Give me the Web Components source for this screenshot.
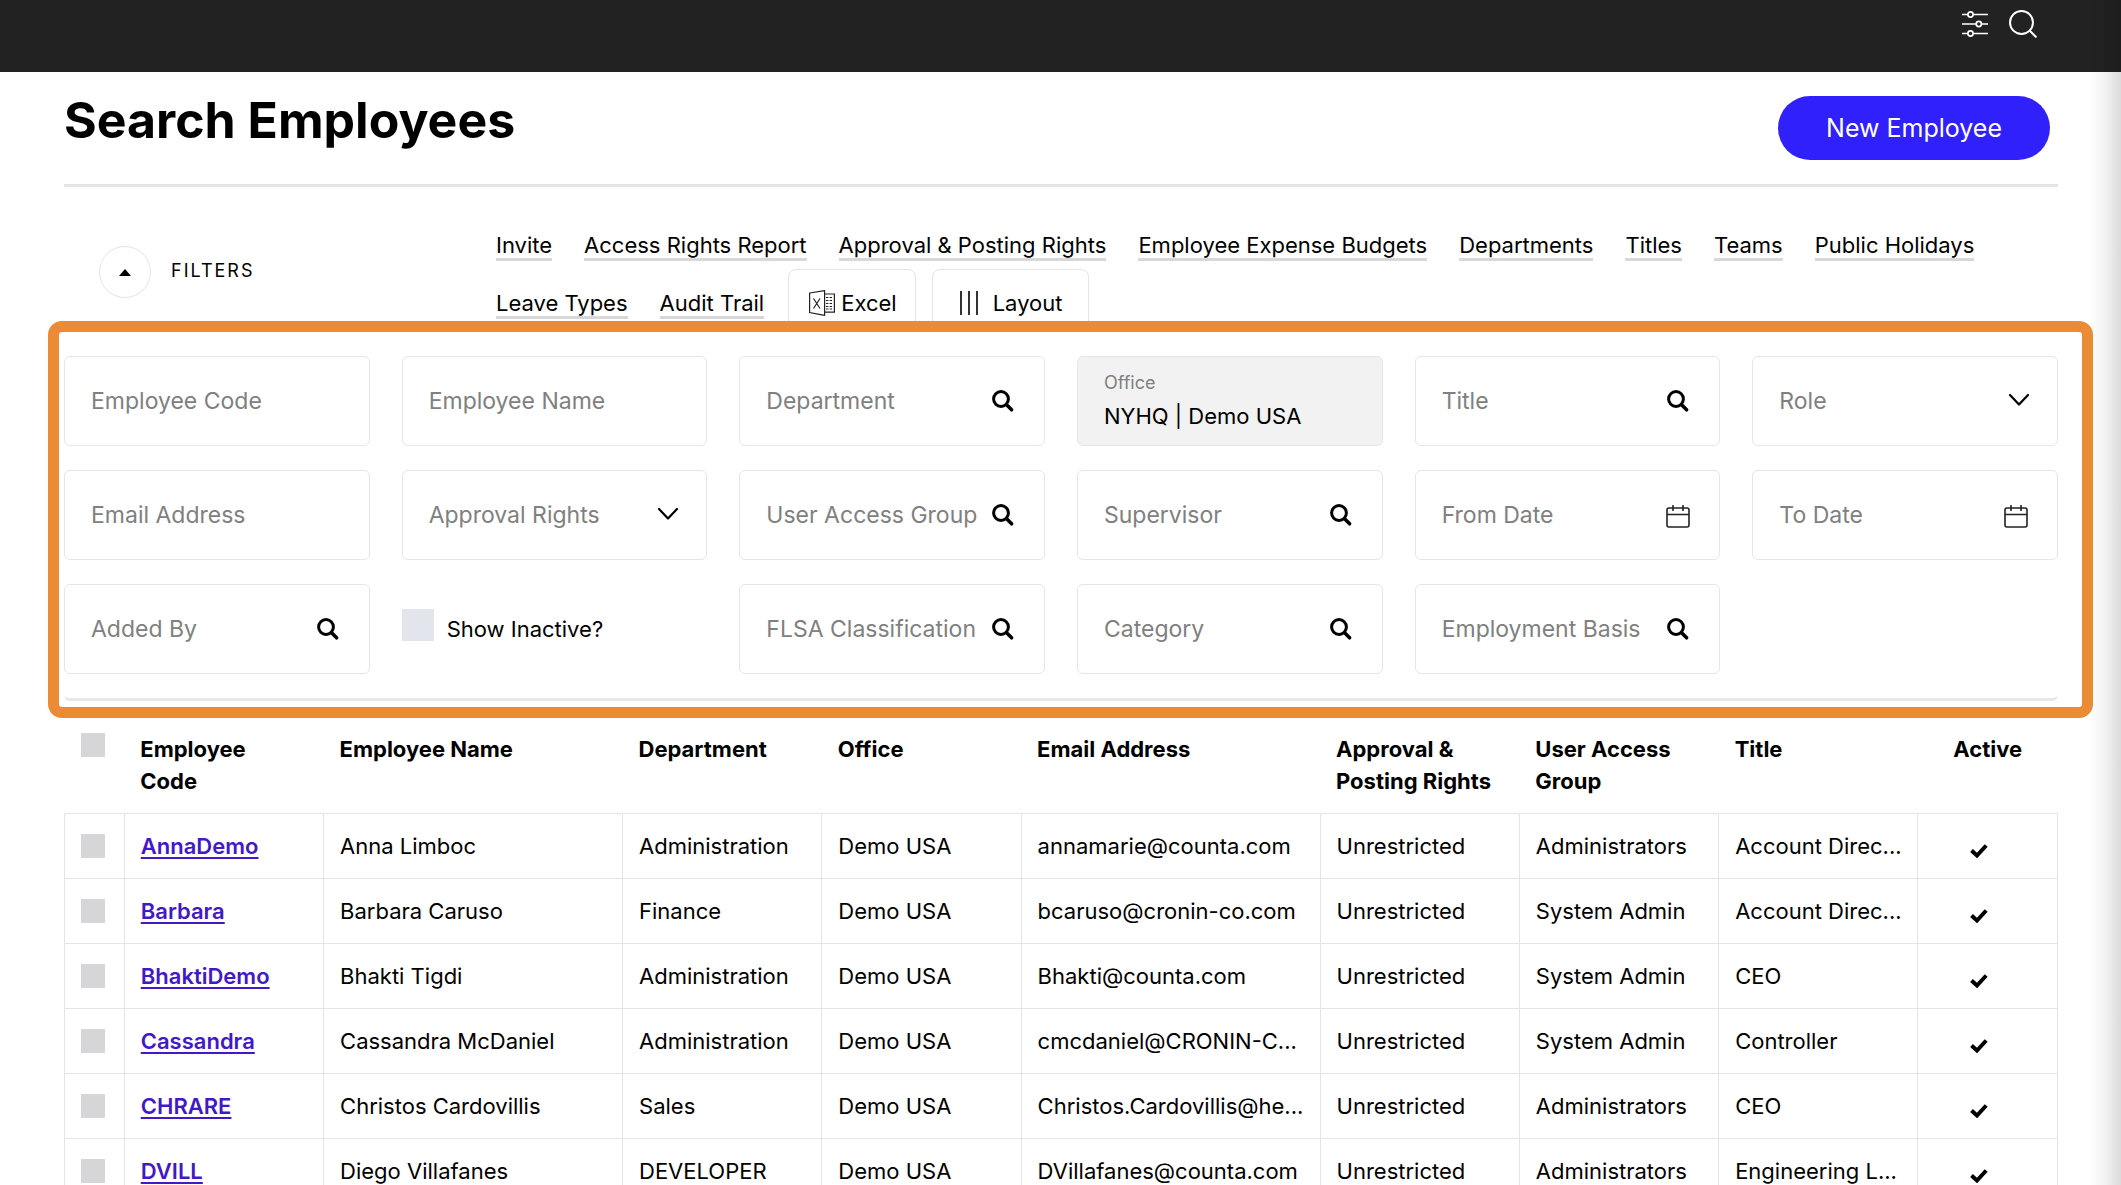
<!DOCTYPE html>
<html lang="en">
<head>
<meta charset="utf-8">
<title>Search Employees</title>
<style>
  body {
    margin: 0;
    background: #fff;
    color: #000;
    font-family: Inter, "Open Sans", sans-serif;
    font-size: 22px;
  }
</style>
</head>
<body>
<employee-page>
  <top-bar slot="top"></top-bar>
  <page-heading heading="Search Employees" action="New Employee"></page-heading>
  <page-toolbar>
    <a href="#invite">Invite</a>
    <a href="#access-rights">Access Rights Report</a>
    <a href="#approval">Approval &amp; Posting Rights</a>
    <a href="#budgets">Employee Expense Budgets</a>
    <a href="#departments">Departments</a>
    <a href="#titles">Titles</a>
    <a href="#teams">Teams</a>
    <a href="#holidays">Public Holidays</a>
    <a href="#leave">Leave Types</a>
    <a href="#audit">Audit Trail</a>
  </page-toolbar>
  <filter-panel>
    <filter-field label="Employee Code"></filter-field>
    <filter-field label="Employee Name"></filter-field>
    <filter-field label="Department" icon="search"></filter-field>
    <filter-field label="Office" value="NYHQ | Demo USA"></filter-field>
    <filter-field label="Title" icon="search"></filter-field>
    <filter-field label="Role" icon="chevron"></filter-field>
    <filter-field label="Email Address"></filter-field>
    <filter-field label="Approval Rights" icon="chevron"></filter-field>
    <filter-field label="User Access Group" icon="search"></filter-field>
    <filter-field label="Supervisor" icon="search"></filter-field>
    <filter-field label="From Date" icon="calendar"></filter-field>
    <filter-field label="To Date" icon="calendar"></filter-field>
    <filter-field label="Added By" icon="search"></filter-field>
    <filter-check label="Show Inactive?"></filter-check>
    <filter-field label="FLSA Classification" icon="search"></filter-field>
    <filter-field label="Category" icon="search"></filter-field>
    <filter-field label="Employment Basis" icon="search"></filter-field>
  </filter-panel>
  <employee-table></employee-table>
</employee-page>

<script>
const ICONS = {
  search: `<svg width="23" height="22" viewBox="0 0 23 22" fill="none" stroke="#000"><circle cx="9" cy="9" r="7.4" stroke-width="3"/><path d="M14.6 14.8l5 5" stroke-width="3.6" stroke-linecap="round"/></svg>`,
  chevron: `<svg width="20" height="22" viewBox="0 0 20 22" fill="none" stroke="#000" stroke-width="2.2" stroke-linecap="round" stroke-linejoin="round"><path d="M2 5l9 9.5L20 5"/></svg>`,
  calendar: `<svg width="24" height="26" viewBox="0 -2 24 26" fill="none" stroke="#222" stroke-width="1.6"><rect x="1" y="4" width="22" height="19" rx="2"/><path d="M1 10.5h22M7 1v6M17 1v6"/></svg>`,
};

class EmployeePage extends HTMLElement {
  constructor() {
    super();
    this.attachShadow({ mode: 'open' });
    this.shadowRoot.innerHTML = `
      <style>
        :host { display: block; position: relative; height: 100vh; overflow: hidden; }
        main { padding: 0 63px 0 64px; }
        .edge {
          position: absolute;
          top: 0;
          right: 0;
          bottom: 0;
          width: 32px;
          background: linear-gradient(to right, rgba(0,0,0,0), rgba(0,0,0,0.05) 50%, rgba(0,0,0,0.14));
          pointer-events: none;
        }
      </style>
      <slot name="top"></slot>
      <main><slot></slot></main>
      <div class="edge"></div>
    `;
  }
}
customElements.define('employee-page', EmployeePage);

class TopBar extends HTMLElement {
  constructor() {
    super();
    this.attachShadow({ mode: 'open' });
    this.shadowRoot.innerHTML = `
      <style>
        :host {
          display: flex;
          justify-content: flex-end;
          align-items: flex-start;
          gap: 20px;
          height: 72px;
          box-sizing: border-box;
          padding: 10px 84px 0 0;
          background: #222;
        }
        button { display: block; padding: 0; border: none; background: none; cursor: pointer; }
        svg { display: block; }
      </style>
      <button type="button" aria-label="Settings">
        <svg width="28" height="28" viewBox="0 0 28 28" fill="none" stroke="#fff" stroke-width="1.7">
          <path d="M1 4.5h6M12.4 4.5h14.6M1 14h14.5M20.7 14h6.3M1 23.5h6M12.4 23.5h14.6"/>
          <circle cx="9.5" cy="4.5" r="2.6"/><circle cx="17.8" cy="14" r="2.6"/><circle cx="9.5" cy="23.5" r="2.6"/>
        </svg>
      </button>
      <button type="button" aria-label="Search">
        <svg width="28" height="28" viewBox="0 0 28 28" fill="none" stroke="#fff" stroke-width="2" stroke-linecap="round">
          <circle cx="12.5" cy="12.5" r="11.5"/><path d="M20.8 20.8l6 6"/>
        </svg>
      </button>
    `;
  }
}
customElements.define('top-bar', TopBar);

class PageHeading extends HTMLElement {
  constructor() {
    super();
    this.attachShadow({ mode: 'open' });
    this.shadowRoot.innerHTML = `
      <style>
        :host {
          display: flex;
          justify-content: space-between;
          align-items: flex-start;
          padding: 24px 8px 24px 0;
          border-bottom: 3px solid #e4e4e4;
        }
        h1 { margin: 0; font-size: 50px; line-height: 48px; font-weight: 700; }
        button {
          height: 64px;
          padding: 0 48px;
          border: none;
          border-radius: 32px;
          background: #2f20fc;
          color: #fff;
          font: inherit;
          font-size: 25px;
          cursor: pointer;
        }
      </style>
      <h1></h1>
      <button type="button"></button>
    `;
  }

  connectedCallback() {
    this.shadowRoot.querySelector('h1').textContent = this.getAttribute('heading');
    this.shadowRoot.querySelector('button').textContent = this.getAttribute('action');
  }
}
customElements.define('page-heading', PageHeading);

class PageToolbar extends HTMLElement {
  constructor() {
    super();
    this.attachShadow({ mode: 'open' });
    this.shadowRoot.innerHTML = `
      <style>
        :host { display: flex; align-items: flex-start; padding-top: 45px; }
        .toggle {
          display: flex;
          align-items: center;
          gap: 20px;
          flex: 0 0 432px;
          box-sizing: border-box;
          padding: 14px 0 0 35px;
          font-size: 18px;
          letter-spacing: 2px;
        }
        .toggle span { padding-bottom: 4px; }
        .toggle button {
          display: grid;
          place-items: center;
          width: 52px;
          height: 52px;
          padding: 0;
          border: 1px solid #e4e4e4;
          border-radius: 50%;
          background: #fff;
          cursor: pointer;
        }
        nav { display: flex; flex-wrap: wrap; align-items: baseline; gap: 8px 24px; flex: 1; min-width: 0; }
        ::slotted(a) {
          margin-right: 8px;
          border-bottom: 3px solid #d8d8d8;
          color: #000;
          line-height: 26px;
          text-decoration: none;
          white-space: nowrap;
        }
        ::slotted(a:last-child) { margin-right: 0; }
        .actions { display: flex; gap: 16px; }
        .actions button {
          display: flex;
          align-items: center;
          gap: 6px;
          padding: 20px 18px 15px 20px;
          border: 1px solid #e4e4e4;
          border-radius: 8px;
          background: #fff;
          color: #000;
          font: inherit;
          line-height: 26px;
          cursor: pointer;
        }
        .actions span { align-self: baseline; }
        .actions .layout { gap: 14px; padding: 20px 26px 15px; }
      </style>
      <div class="toggle">
        <button type="button" aria-labelledby="filters">
          <svg width="12" height="7" viewBox="0 0 12 7"><path d="M6 0l6 7H0z"/></svg>
        </button>
        <span id="filters">FILTERS</span>
      </div>
      <nav>
        <slot></slot>
        <div class="actions">
          <button type="button">
            <svg width="26" height="26" viewBox="0 0 26 26" fill="none" stroke="#222" stroke-width="1.2">
              <path d="M.6 3L15.6.6v24.8L.6 22.6z"/>
              <path d="M15.6 4h9.8v18.2h-9.8"/>
              <path d="M4.5 8.5l6.500 10M11 8.5l-6.500 10"/>
              <path d="M17 7.5h6M17 10.5h6M17 13.5h6M17 16.5h6M17 19h6" stroke-dasharray="2.4 1.2"/>
            </svg>
            <span>Excel</span>
          </button>
          <button type="button" class="layout">
            <svg width="20" height="26" viewBox="0 0 20 26" stroke="#333" stroke-width="2"><path d="M2 1v24M10 1v24M18 1v24"/></svg>
            <span>Layout</span>
          </button>
        </div>
      </nav>
    `;
  }
}
customElements.define('page-toolbar', PageToolbar);

class FilterPanel extends HTMLElement {
  constructor() {
    super();
    this.attachShadow({ mode: 'open' });
    this.shadowRoot.innerHTML = `
      <style>
        :host { display: block; position: relative; }
        form {
          display: grid;
          grid-template-columns: repeat(6, minmax(0, 1fr));
          grid-auto-rows: 90px;
          gap: 24px 32px;
          padding: 24px 0;
          border-bottom: 3px solid #e6e7e9;
          border-radius: 0 0 6px 6px;
        }
        .highlight {
          position: absolute;
          inset: -11px -35px -17px -16px;
          border: 11px solid #ec8b35;
          border-radius: 14px;
          pointer-events: none;
        }
      </style>
      <form><slot></slot></form>
      <div class="highlight"></div>
    `;
  }
}
customElements.define('filter-panel', FilterPanel);

class FilterField extends HTMLElement {
  constructor() {
    super();
    this.attachShadow({ mode: 'open' });
  }

  connectedCallback() {
    const label = this.getAttribute('label');
    const icon = this.getAttribute('icon');
    const value = this.getAttribute('value') ?? '';
    const control = icon === 'chevron'
      ? '<select id="control"><option value=""></option></select>'
      : `<input id="control" type="text" value="${value}" autocomplete="off">`;
    let mark = '';
    if (icon === 'chevron') mark = `<span class="mark">${ICONS.chevron}</span>`;
    else if (icon) mark = `<button type="button" class="mark" aria-label="Pick ${label}">${ICONS[icon]}</button>`;

    this.shadowRoot.innerHTML = `
      <style>
        :host { display: block; }
        .box {
          display: grid;
          grid-template-columns: minmax(0, 1fr) auto;
          align-items: center;
          height: 100%;
          box-sizing: border-box;
          padding: 0 29px 0 26px;
          border: 1px solid #e6e6e6;
          border-radius: 6px;
        }
        label, input, select { grid-area: 1 / 1; }
        label {
          color: #808080;
          font-size: 23px;
          line-height: 32px;
          white-space: nowrap;
          pointer-events: none;
        }
        input, select {
          width: 100%;
          height: 64px;
          padding: 0;
          border: none;
          outline: none;
          background: none;
          color: #000;
          font: inherit;
          appearance: none;
        }
        .mark { grid-area: 1 / 2; display: block; padding: 0; border: none; background: none; }
        button.mark { cursor: pointer; }
        .mark svg { display: block; overflow: visible; }
        .filled { align-content: center; padding-top: 6px; background: #f2f2f2; }
        .filled label { font-size: 18px; line-height: 24px; }
        .filled input { grid-area: 2 / 1; height: 42px; }
      </style>
      <div class="box ${value ? 'filled' : ''}">
        <label for="control">${label}</label>
        ${control}
        ${mark}
      </div>
    `;
  }
}
customElements.define('filter-field', FilterField);

class FilterCheck extends HTMLElement {
  constructor() {
    super();
    this.attachShadow({ mode: 'open' });
    this.shadowRoot.innerHTML = `
      <style>
        :host { display: flex; align-items: center; gap: 13px; }
        input { width: 32px; height: 32px; margin: 0 0 8px; appearance: none; background: #e3e5ed; }
        input:checked { background: #2f20fc; }
      </style>
      <input id="check" type="checkbox">
      <label for="check"></label>
    `;
  }

  connectedCallback() {
    this.shadowRoot.querySelector('label').textContent = this.getAttribute('label');
  }
}
customElements.define('filter-check', FilterCheck);

const COLUMNS = ['Employee Code', 'Employee Name', 'Department', 'Office', 'Email Address',
  'Approval & Posting Rights', 'User Access Group', 'Title', 'Active'];

const EMPLOYEES = [
  ['AnnaDemo', 'Anna Limboc', 'Administration', 'Demo USA', 'annamarie@counta.com', 'Unrestricted', 'Administrators', 'Account Direc...'],
  ['Barbara', 'Barbara Caruso', 'Finance', 'Demo USA', 'bcaruso@cronin-co.com', 'Unrestricted', 'System Admin', 'Account Direc...'],
  ['BhaktiDemo', 'Bhakti Tigdi', 'Administration', 'Demo USA', 'Bhakti@counta.com', 'Unrestricted', 'System Admin', 'CEO'],
  ['Cassandra', 'Cassandra McDaniel', 'Administration', 'Demo USA', 'cmcdaniel@CRONIN-C...', 'Unrestricted', 'System Admin', 'Controller'],
  ['CHRARE', 'Christos Cardovillis', 'Sales', 'Demo USA', 'Christos.Cardovillis@he...', 'Unrestricted', 'Administrators', 'CEO'],
  ['DVILL', 'Diego Villafanes', 'DEVELOPER', 'Demo USA', 'DVillafanes@counta.com', 'Unrestricted', 'Administrators', 'Engineering L...'],
];

class EmployeeTable extends HTMLElement {
  constructor() {
    super();
    this.attachShadow({ mode: 'open' });
    this.shadowRoot.innerHTML = `
      <style>
        :host { display: block; }
        table { width: 100%; table-layout: fixed; border-collapse: collapse; }
        col { width: 10%; }
        col.pick { width: 3%; }
        col.wide { width: 15%; }
        col.active { width: 7%; }
        th {
          padding: 32px 16px 16px;
          font-weight: 700;
          line-height: 32px;
          text-align: left;
          vertical-align: top;
        }
        td {
          height: 64px;
          padding: 0 16px;
          border: 1px solid #e4e4e4;
          line-height: 32px;
          white-space: nowrap;
        }
        th:last-child { text-align: center; }
        td:last-child { padding-right: 34px; text-align: center; }
        td:last-child svg { display: inline-block; vertical-align: middle; margin-top: 5px; }
        input { display: block; width: 24px; height: 24px; margin: 0; appearance: none; background: #d6d6d8; }
        input:checked { background: #2f20fc; }
        a { color: #4318c8; font-weight: 600; text-decoration: underline; text-underline-offset: 3px; text-decoration-thickness: 2px; }
      </style>
      <table>
        <colgroup>
          <col class="pick"><col><col class="wide"><col><col><col class="wide"><col><col><col><col class="active">
        </colgroup>
        <thead><tr>
          <th><input type="checkbox" aria-label="Select all"></th>
          ${COLUMNS.map((name) => `<th scope="col">${name.replace('&', '&amp;')}</th>`).join('')}
        </tr></thead>
        <tbody>${EMPLOYEES.map((row) => this.renderRow(row)).join('')}</tbody>
      </table>
    `;
  }

  renderRow([code, ...rest]) {
    return `<tr>
      <td><input type="checkbox" aria-label="Select ${code}"></td>
      <td><a href="#${code}">${code}</a></td>
      ${rest.map((text) => `<td>${text}</td>`).join('')}
      <td><svg width="18" height="14" viewBox="0 0 18 14" role="img" aria-label="Active" fill="none" stroke="#000" stroke-width="4"><path d="M1.5 6.5l5.500 5L16.2 1.5"/></svg></td>
    </tr>`;
  }
}
customElements.define('employee-table', EmployeeTable);
</script>
</body>
</html>
